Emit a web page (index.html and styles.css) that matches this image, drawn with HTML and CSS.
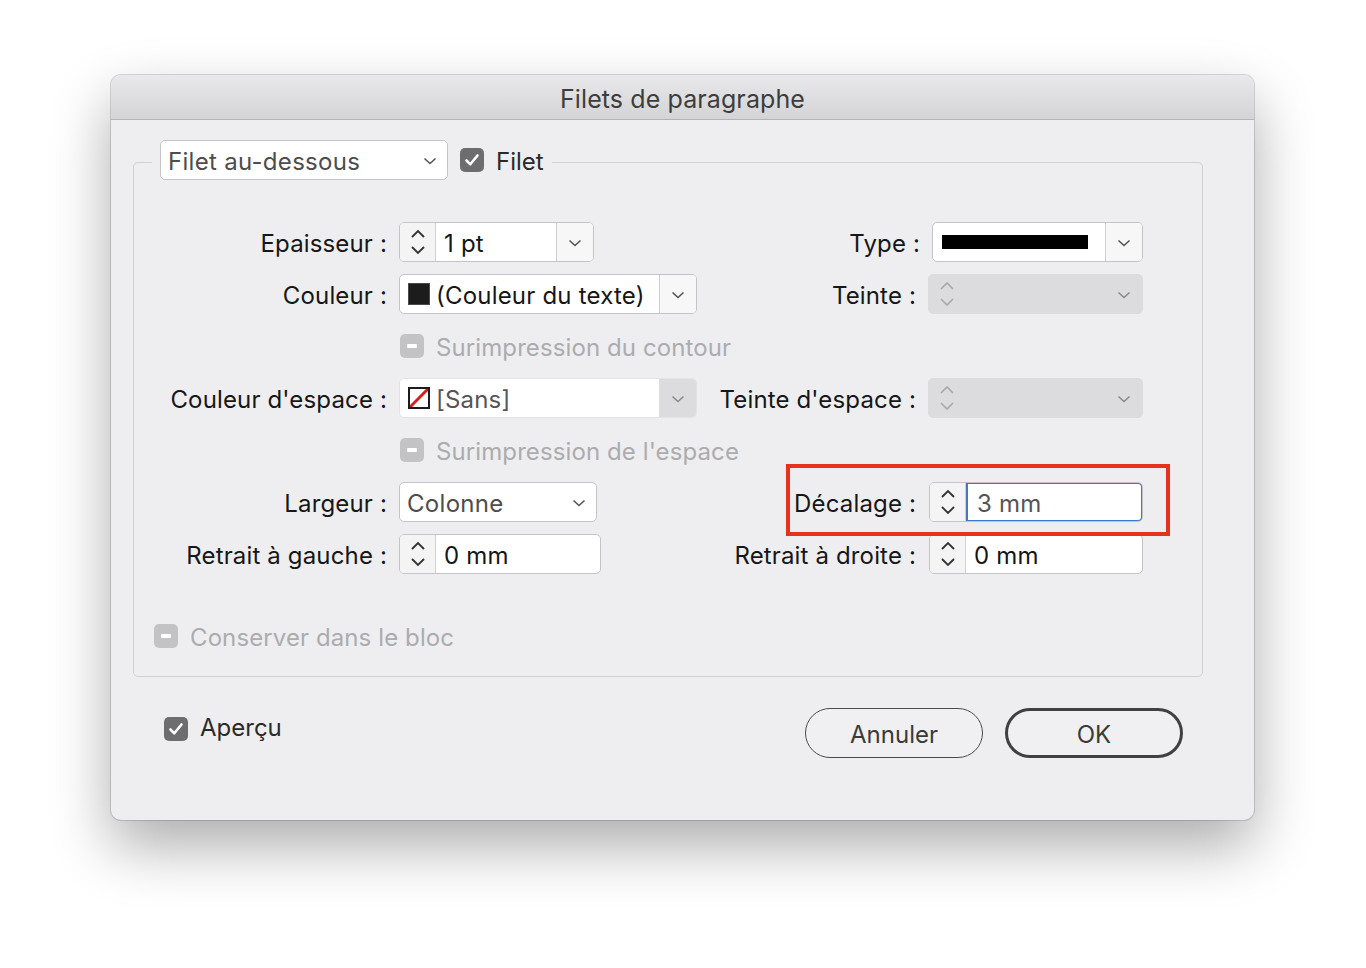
FILE: index.html
```html
<!DOCTYPE html>
<html lang="fr">
<head>
<meta charset="utf-8">
<title>Filets de paragraphe</title>
<link rel="stylesheet" href="styles.css">
</head>
<body>
<div class="dialog">
  <div class="titlebar">Filets de paragraphe</div>
  <div class="group">
    <div class="group-head">
      <div class="popup head-popup">
        <span class="popup-text">Filet au-dessous</span>
        <svg class="chev" width="14" height="8" viewBox="0 0 14 8"><path d="M1.5 1.5l5.5 5 5.5-5" fill="none" stroke="#555" stroke-width="1.6"/></svg>
      </div>
      <span class="cb cb-on"><svg width="16" height="14" viewBox="0 0 16 14"><path d="M2.5 7.5l3.8 3.8L13.5 2.5" fill="none" stroke="#fff" stroke-width="2.6" stroke-linecap="round" stroke-linejoin="round"/></svg></span>
      <span class="head-label">Filet</span>
    </div>

    <div class="grid">
      <!-- row 1 -->
      <div class="lbl">Epaisseur :</div>
      <div class="field w195">
        <span class="step"><svg width="16" height="32" viewBox="0 0 16 32"><path d="M2 11l6-6 6 6M2 21l6 6 6-6" fill="none" stroke="#333" stroke-width="1.8"/></svg></span>
        <span class="val">1 pt</span>
        <span class="drop"><svg width="14" height="8" viewBox="0 0 14 8"><path d="M1.5 1.5l5.5 5 5.5-5" fill="none" stroke="#555" stroke-width="1.6"/></svg></span>
      </div>
      <div class="lbl lbl-type">Type :</div>
      <div class="field w211 type-field">
        <span class="val"><span class="linebar"></span></span>
        <span class="drop"><svg width="14" height="8" viewBox="0 0 14 8"><path d="M1.5 1.5l5.5 5 5.5-5" fill="none" stroke="#555" stroke-width="1.6"/></svg></span>
      </div>

      <!-- row 2 -->
      <div class="lbl">Couleur :</div>
      <div class="field w298">
        <span class="val"><span class="swatch swatch-black"></span>(Couleur du texte)</span>
        <span class="drop"><svg width="14" height="8" viewBox="0 0 14 8"><path d="M1.5 1.5l5.5 5 5.5-5" fill="none" stroke="#555" stroke-width="1.6"/></svg></span>
      </div>
      <div class="lbl">Teinte :</div>
      <div class="field disabled w215">
        <span class="step"><svg width="16" height="32" viewBox="0 0 16 32"><path d="M2 11l6-6 6 6M2 21l6 6 6-6" fill="none" stroke="#a9a9ab" stroke-width="1.6"/></svg></span>
        <span class="val"></span>
        <span class="drop"><svg width="14" height="8" viewBox="0 0 14 8"><path d="M1.5 1.5l5.5 5 5.5-5" fill="none" stroke="#8a8a8c" stroke-width="1.6"/></svg></span>
      </div>

      <!-- row 3 -->
      <div class="lbl"></div>
      <div class="cbrow span3">
        <span class="cb cb-dis"><span class="dash"></span></span>
        <span class="dis-text">Surimpression du contour</span>
      </div>

      <!-- row 4 -->
      <div class="lbl">Couleur d'espace :</div>
      <div class="field w298 half-dis">
        <span class="val grey"><span class="swatch swatch-none"><svg width="22" height="22" viewBox="0 0 22 22"><path d="M2 20L20 2" stroke="#d0211c" stroke-width="3"/></svg></span>[Sans]</span>
        <span class="drop"><svg width="14" height="8" viewBox="0 0 14 8"><path d="M1.5 1.5l5.5 5 5.5-5" fill="none" stroke="#8a8a8c" stroke-width="1.6"/></svg></span>
      </div>
      <div class="lbl">Teinte d'espace :</div>
      <div class="field disabled w215">
        <span class="step"><svg width="16" height="32" viewBox="0 0 16 32"><path d="M2 11l6-6 6 6M2 21l6 6 6-6" fill="none" stroke="#a9a9ab" stroke-width="1.6"/></svg></span>
        <span class="val"></span>
        <span class="drop"><svg width="14" height="8" viewBox="0 0 14 8"><path d="M1.5 1.5l5.5 5 5.5-5" fill="none" stroke="#8a8a8c" stroke-width="1.6"/></svg></span>
      </div>

      <!-- row 5 -->
      <div class="lbl"></div>
      <div class="cbrow span3">
        <span class="cb cb-dis"><span class="dash"></span></span>
        <span class="dis-text">Surimpression de l'espace</span>
      </div>

      <!-- row 6 -->
      <div class="lbl">Largeur :</div>
      <div class="popup w198">
        <span class="popup-text">Colonne</span>
        <svg class="chev" width="14" height="8" viewBox="0 0 14 8"><path d="M1.5 1.5l5.5 5 5.5-5" fill="none" stroke="#555" stroke-width="1.6"/></svg>
      </div>
      <div class="lbl">Décalage :</div>
      <div class="field w214 focus-field">
        <span class="step"><svg width="16" height="32" viewBox="0 0 16 32"><path d="M2 11l6-6 6 6M2 21l6 6 6-6" fill="none" stroke="#333" stroke-width="1.8"/></svg></span>
        <span class="val focus grey">3 mm</span>
      </div>

      <!-- row 7 -->
      <div class="lbl">Retrait à gauche :</div>
      <div class="field w202">
        <span class="step"><svg width="16" height="32" viewBox="0 0 16 32"><path d="M2 11l6-6 6 6M2 21l6 6 6-6" fill="none" stroke="#333" stroke-width="1.8"/></svg></span>
        <span class="val">0 mm</span>
      </div>
      <div class="lbl">Retrait à droite :</div>
      <div class="field w214">
        <span class="step"><svg width="16" height="32" viewBox="0 0 16 32"><path d="M2 11l6-6 6 6M2 21l6 6 6-6" fill="none" stroke="#333" stroke-width="1.8"/></svg></span>
        <span class="val">0 mm</span>
      </div>
    </div>

    <div class="cbrow keep">
      <span class="cb cb-dis"><span class="dash"></span></span>
      <span class="dis-text">Conserver dans le bloc</span>
    </div>

    <div class="highlight"></div>
  </div>

  <div class="footer">
    <div class="preview">
      <span class="cb cb-on"><svg width="16" height="14" viewBox="0 0 16 14"><path d="M2.5 7.5l3.8 3.8L13.5 2.5" fill="none" stroke="#fff" stroke-width="2.6" stroke-linecap="round" stroke-linejoin="round"/></svg></span>
      <span class="preview-label">Aperçu</span>
    </div>
    <div class="buttons">
      <button class="btn">Annuler</button>
      <button class="btn btn-default">OK</button>
    </div>
  </div>
</div>
</body>
</html>
```

FILE: styles.css
```css
* { box-sizing: border-box; }

html, body {
  margin: 0;
  padding: 0;
  background: #ffffff;
}

body {
  font-family: Inter, "Noto Sans", "Liberation Sans", sans-serif;
  font-size: 24px;
  color: #1b1b1b;
  padding: 75px 0 0 111px;
  min-height: 968px;
}

.dialog {
  width: 1143px;
  height: 745px;
  background: #eeeef0;
  border-radius: 10px;
  box-shadow: 0 26px 60px rgba(0, 0, 0, 0.33), 0 0 0 1px rgba(0, 0, 0, 0.14);
  display: flex;
  flex-direction: column;
}

.titlebar {
  height: 45px;
  flex: none;
  border-radius: 10px 10px 0 0;
  background: linear-gradient(#e9e9eb, #d4d4d6);
  border-bottom: 1px solid #b3b3b5;
  text-align: center;
  line-height: 48px;
  font-size: 25px;
  color: #3d3d3d;
  letter-spacing: 0.1px;
}

.group {
  position: relative;
  margin: 42px 51px 0 22px;
  border: 1px solid #d1d1d3;
  border-radius: 5px;
  height: 515px;
  flex: none;
}

.group-head {
  display: flex;
  align-items: center;
  margin: -23px 0 0 18px;
  padding: 0 8px;
  background: #eeeef0;
  width: max-content;
  height: 40px;
}

.popup {
  display: flex;
  align-items: center;
  justify-content: space-between;
  height: 40px;
  background: #ffffff;
  border: 1px solid #c4c4c6;
  border-radius: 5px;
  padding: 0 10px 0 7px;
}

.head-popup { width: 288px; }

.popup-text {
  color: #4d4d4d;
  letter-spacing: 0.3px;
  padding-top: 3px;
}

.chev { margin-top: 2px; }

.head-popup + .cb { margin-left: 12px; }

.head-label {
  margin-left: 12px;
  color: #2a2a2a;
  padding-top: 3px;
}

.cb {
  display: inline-flex;
  align-items: center;
  justify-content: center;
  width: 24px;
  height: 24px;
  border-radius: 5px;
  flex: none;
}

.cb-on { background: #6d6d6f; }

.cb-dis { background: #c3c3c5; }

.dash {
  width: 10px;
  height: 4px;
  background: #ffffff;
  border-radius: 1px;
}

.grid {
  display: grid;
  grid-template-columns: 253px 298px 207px 215px;
  column-gap: 12px;
  grid-auto-rows: 40px;
  row-gap: 12px;
  margin-top: 42px;
}

.lbl {
  display: flex;
  align-items: center;
  justify-content: flex-end;
  white-space: nowrap;
  color: #161616;
  padding-top: 3px;
  letter-spacing: 0.15px;
}

.lbl-type { margin-right: -4px; }

.field {
  display: flex;
  height: 40px;
  background: #ffffff;
  border: 1px solid #c4c4c6;
  border-radius: 5px;
  overflow: hidden;
  justify-self: start;
}

.w195 { width: 195px; }
.w198 { width: 198px; justify-self: start; }
.w202 { width: 202px; }
.w211 { width: 211px; }
.w214 { width: 214px; margin-left: 1px; }
.w215 { width: 215px; }
.w298 { width: 298px; }

.type-field { margin-left: 4px; }

.step {
  width: 36px;
  flex: none;
  display: flex;
  align-items: center;
  justify-content: center;
  background: #f4f4f5;
  border-right: 1px solid #d2d2d4;
}

.val {
  flex: 1;
  display: flex;
  align-items: center;
  padding-left: 8px;
  padding-top: 3px;
  white-space: nowrap;
  color: #161616;
  letter-spacing: 0.2px;
}

.val.grey { color: #555557; }

.drop {
  width: 37px;
  flex: none;
  display: flex;
  align-items: center;
  justify-content: center;
  background: #f7f7f8;
  border-left: 1px solid #cfcfd1;
}

.drop svg { margin-top: 2px; }

.linebar {
  width: 146px;
  height: 14px;
  background: #000000;
  margin: -3px 0 0 1px;
}

.swatch {
  width: 22px;
  height: 22px;
  margin: -3px 6px 0 0;
  flex: none;
  display: inline-block;
}

.swatch-black {
  background: #1c1c1c;
  border: 1px solid #4a4a4a;
}

.swatch-none {
  background: #ffffff;
  border: 2px solid #1c1c1c;
  overflow: hidden;
}

.swatch-none svg {
  display: block;
  margin: -2px;
}

.disabled {
  background: #dcdcde;
  border-color: #dcdcde;
}

.disabled .step,
.disabled .drop {
  background: transparent;
  border: none;
}

.disabled .drop { width: 36px; }

.half-dis {
  border-color: #e4e4e6;
}

.half-dis .drop {
  background: #dcdcde;
  border-left: none;
}

.focus-field {
  border-color: #c4c4c6;
}

.val.focus {
  border: 2px solid #3d79c8;
  border-radius: 0 5px 5px 0;
  margin: -1px -1px -1px 0;
  padding-left: 9px;
}

.cbrow {
  display: flex;
  align-items: center;
  gap: 12px;
}

.span3 {
  grid-column: 2 / span 3;
  padding-left: 1px;
}

.dis-text {
  color: #acacae;
  letter-spacing: 0.1px;
  padding-top: 3px;
}

.keep {
  height: 40px;
  margin: 42px 0 0 20px;
}

.highlight {
  position: absolute;
  left: 652px;
  top: 301px;
  width: 384px;
  height: 72px;
  border: 4px solid #e6311c;
  pointer-events: none;
}

.footer {
  display: flex;
  justify-content: space-between;
  align-items: flex-start;
  margin: 31px 71px 0 53px;
}

.preview {
  display: flex;
  align-items: center;
  gap: 12px;
  margin-top: 7px;
}

.preview-label {
  color: #2a2a2a;
  margin-top: -2px;
}

.buttons {
  display: flex;
  gap: 22px;
}

.btn {
  width: 178px;
  height: 50px;
  border-radius: 25px;
  background: #f0f0f2;
  border: 1.5px solid #4a4a4c;
  font-family: Inter, "Noto Sans", "Liberation Sans", sans-serif;
  font-size: 24px;
  color: #3a3a3a;
  padding: 3px 0 0;
}

.btn-default {
  border: 3px solid #404042;
}
```
